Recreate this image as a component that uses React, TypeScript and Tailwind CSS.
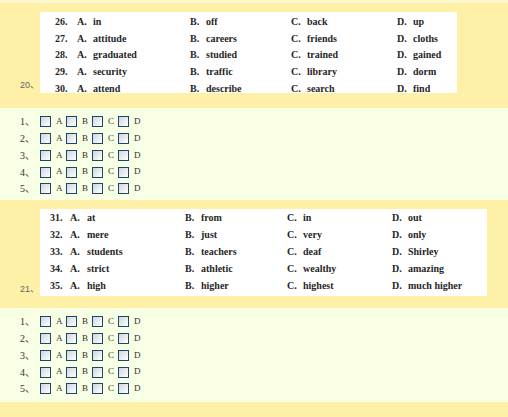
const set1 = [
  ['26', 'in', 'off', 'back', 'up'],
  ['27', 'attitude', 'careers', 'friends', 'cloths'],
  ['28', 'graduated', 'studied', 'trained', 'gained'],
  ['29', 'security', 'traffic', 'library', 'dorm'],
  ['30', 'attend', 'describe', 'search', 'find'],
]

const set2 = [
  ['31', 'at', 'from', 'in', 'out'],
  ['32', 'mere', 'just', 'very', 'only'],
  ['33', 'students', 'teachers', 'deaf', 'Shirley'],
  ['34', 'strict', 'athletic', 'wealthy', 'amazing'],
  ['35', 'high', 'higher', 'highest', 'much higher'],
]

const serif = { fontFamily: '"Liberation Serif", "Times New Roman", serif' }
const cjk = { fontFamily: '"Liberation Serif", "Noto Sans CJK SC", serif' }

function Option({ letter, word, w }: { letter: string; word: string; w: string }) {
  return (
    <div className={`flex ${w}`}>
      <span className="w-[16px]">{letter}.</span>
      <span>{word}</span>
    </div>
  )
}

function QuestionImage({ rows, wide }: { rows: string[][]; wide?: boolean }) {
  return (
    <div
      className={
        wide
          ? 'bg-white w-[447px] h-[87px] pl-[10px] text-[10px] font-bold text-[#262626]'
          : 'bg-white w-[417px] h-[81px] pl-[15px] pt-[1px] text-[10px] font-bold text-[#262626]'
      }
      style={serif}
    >
      {rows.map((r) => (
        <div key={r[0]} className={wide ? 'flex h-[17px] items-center' : 'flex h-[16.75px] items-center'}>
          <div className="flex w-[135px]">
            <span className={wide ? 'w-[20px]' : 'w-[22px]'}>{r[0]}.</span>
            <span className={wide ? 'w-[17px]' : 'w-[16px]'}>A.</span>
            <span>{r[1]}</span>
          </div>
          <Option letter="B" word={r[2]} w={wide ? 'w-[102px]' : 'w-[101px]'} />
          <Option letter="C" word={r[3]} w={wide ? 'w-[105px]' : 'w-[106px]'} />
          <Option letter="D" word={r[4]} w="" />
        </div>
      ))}
    </div>
  )
}

function Box() {
  return (
    <span className="block shrink-0 w-[11px] h-[11px] border border-[#1f4666] bg-gradient-to-br from-[#cfd6de] to-white" />
  )
}

function AnswerRows({ h }: { h: string }) {
  return (
    <div className={`bg-[#f7ffe4] ${h} pt-[5.6px] text-[10px] text-[#333]`} style={cjk}>
      {[1, 2, 3, 4, 5].map((n) => (
        <div key={n} className="flex h-[16.75px] items-center">
          <span className="w-[40px] pl-[20px]">{n}、</span>
          {['A', 'B', 'C', 'D'].map((l) => (
            <div key={l} className="flex w-[26px] items-center">
              <Box />
              <span className="ml-[5px] text-[9px]">{l}</span>
            </div>
          ))}
        </div>
      ))}
    </div>
  )
}

export default function App() {
  return (
    <div className="w-[508px] h-[417px] bg-[#fff0a8] overflow-hidden">
      <div className="h-[3px] bg-[#fdf8d0]" />
      <div className="flex pt-[9px] h-[105px]">
        <div className="w-[40px] h-[81px] flex items-end pl-[20px] pb-[1px] text-[9px] text-[#666]" style={{ fontFamily: '"Liberation Sans", "Noto Sans CJK SC", sans-serif' }}>
          20、
        </div>
        <QuestionImage rows={set1} />
      </div>
      <AnswerRows h="h-[92px]" />
      <div className="flex pt-[9px] h-[108px]">
        <div className="w-[40px] h-[87px] flex items-end pl-[20px] text-[9px] text-[#666]" style={{ fontFamily: '"Liberation Sans", "Noto Sans CJK SC", sans-serif' }}>
          21、
        </div>
        <QuestionImage rows={set2} wide />
      </div>
      <AnswerRows h="h-[94px]" />
    </div>
  )
}
